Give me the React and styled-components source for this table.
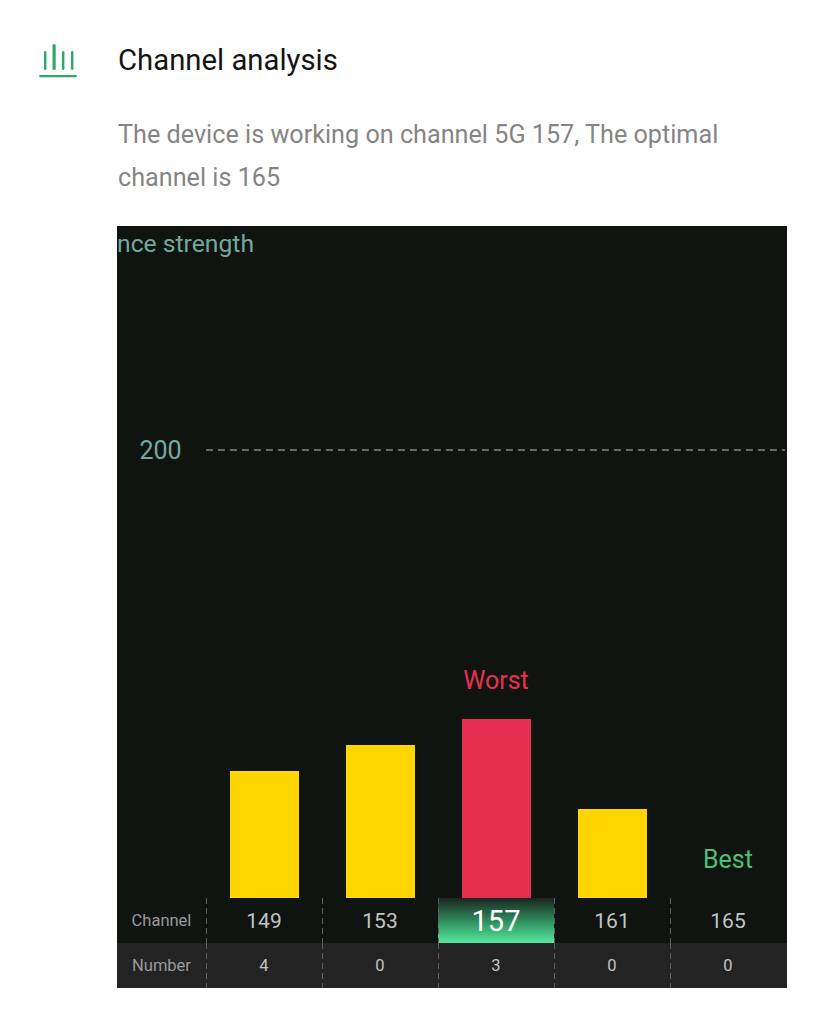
import styled, { createGlobalStyle } from "styled-components"

const GlobalStyle = createGlobalStyle`
    body {
        margin: 0;
        background: #FFFFFF;
        font-family: Roboto, "Noto Sans", sans-serif;
    }
`

const channels = [
    { ch: 149, num: 4, height: 127 },
    { ch: 153, num: 0, height: 153 },
    { ch: 157, num: 3, height: 179, worst: true, current: true },
    { ch: 161, num: 0, height: 89 },
    { ch: 165, num: 0, height: 0, best: true },
]

function ChartIcon() {
    return (
        <svg width="38" height="34" viewBox="0 0 38 34">
            <g fill="#2FA866">
                <rect x="5" y="7" width="2.4" height="19" rx="1.2" />
                <rect x="13.5" y="0" width="3.2" height="26" rx="1.6" />
                <rect x="23" y="7" width="2.4" height="19" rx="1.2" />
                <rect x="32" y="7" width="2.4" height="19" rx="1.2" />
                <rect x="0" y="31" width="38" height="2.2" rx="1.1" />
            </g>
        </svg>
    )
}

export default function App() {
    return (
        <>
            <GlobalStyle />
            <Page>
                <Header>
                    <IconBox>
                        <ChartIcon />
                    </IconBox>
                    <Title>Channel analysis</Title>
                </Header>

                <Body>
                    <Description>
                        The device is working on channel 5G 157, The optimal channel is 165
                    </Description>

                    <Panel>
                        <ChartTitle>nce strength</ChartTitle>

                        <GridLineRow>
                            <AxisLabel>200</AxisLabel>
                            <DashLine />
                        </GridLineRow>

                        <BarsRow>
                            <span />
                            {channels.map((c) => (
                                <BarCell key={c.ch}>
                                    {c.worst && <Tag $color="#E8304F">Worst</Tag>}
                                    {c.best && <Tag $color="#4CC079">Best</Tag>}
                                    {c.height > 0 && (
                                        <Bar $worst={c.worst} style={{ height: c.height }} />
                                    )}
                                </BarCell>
                            ))}
                        </BarsRow>

                        <TableRow>
                            <RowLabel>Channel</RowLabel>
                            {channels.map((c) => (
                                <ChannelCell key={c.ch} $current={c.current}>
                                    {c.ch}
                                </ChannelCell>
                            ))}
                        </TableRow>

                        <TableRow $dark>
                            <RowLabel>Number</RowLabel>
                            {channels.map((c) => (
                                <NumberCell key={c.ch}>{c.num}</NumberCell>
                            ))}
                        </TableRow>
                    </Panel>
                </Body>
            </Page>
        </>
    )
}

const dashedLeft = `
    repeating-linear-gradient(to bottom, #5F5F5F 0 6px, transparent 6px 10px) left top / 1px 100% no-repeat
`

const Page = styled.div`
    padding-top: 40px;
    padding-bottom: 36px;
`

const Header = styled.div`
    display: flex;
    align-items: center;
    height: 40px;
    padding-left: 39px;
    gap: 41px;
`

const IconBox = styled.div`
    width: 38px;
    height: 34px;
    display: flex;
    margin-top: 2px;
`

const Title = styled.h1`
    margin: 0;
    font-size: 29.3px;
    font-weight: 400;
    line-height: 40px;
    color: #141414;
`

const Body = styled.div`
    padding-left: 117px;
    width: 670px;
`

const Description = styled.p`
    margin: 33px 0 27px 1px;
    font-size: 25.2px;
    line-height: 43px;
    color: #858585;
    width: 660px;
`

const Panel = styled.div`
    width: 670px;
    height: 762px;
    background: #0F1411;
    display: flex;
    flex-direction: column;
    overflow: hidden;
`

const ChartTitle = styled.div`
    font-size: 24.7px;
    line-height: 36px;
    color: #74A89E;
    white-space: nowrap;
`

const GridLineRow = styled.div`
    display: grid;
    grid-template-columns: 89px 1fr;
    align-items: center;
    height: 30px;
    margin-top: 173px;
`

const AxisLabel = styled.span`
    font-size: 25px;
    color: #78A9A1;
    text-align: center;
    margin-left: -2px;
`

const DashLine = styled.div`
    height: 2px;
    margin-right: 2px;
    background: repeating-linear-gradient(to right, #646866 0 7px, transparent 7px 12px);
`

const BarsRow = styled.div`
    flex: 1;
    display: grid;
    grid-template-columns: 89px repeat(5, 116px);
`

const BarCell = styled.div`
    display: flex;
    flex-direction: column;
    justify-content: flex-end;
    align-items: center;
`

const Tag = styled.span`
    font-size: 25px;
    line-height: 28px;
    color: ${(p) => p.$color};
    margin-bottom: 24px;
`

const Bar = styled.div`
    width: 69px;
    background: ${(p) => (p.$worst ? "#E62E51" : "#FFD500")};
`

const TableRow = styled.div`
    display: grid;
    grid-template-columns: 89px repeat(5, 116px);
    height: 45px;
    background: ${(p) => (p.$dark ? "#232323" : "transparent")};
`

const RowLabel = styled.div`
    display: flex;
    align-items: center;
    justify-content: center;
    font-size: 16.5px;
    color: #9A9A9A;
`

const ChannelCell = styled.div`
    display: flex;
    align-items: center;
    justify-content: center;
    font-size: ${(p) => (p.$current ? "29px" : "21px")};
    color: ${(p) => (p.$current ? "#FFFFFF" : "#C4C4C4")};
    background: ${dashedLeft}${(p) =>
        p.$current
            ? ", linear-gradient(to bottom, #1C2420 0%, #2E8A5C 50%, #55EA9E 100%)"
            : ""};
`

const NumberCell = styled.div`
    display: flex;
    align-items: center;
    justify-content: center;
    font-size: 16.5px;
    color: #C4C4C4;
    background: ${dashedLeft};
`
